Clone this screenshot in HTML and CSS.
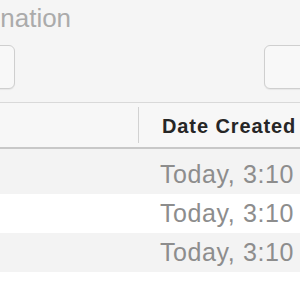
FILE: index.html
```html
<!DOCTYPE html>
<html lang="en">
<head>
  <meta charset="UTF-8">
  <title>Destination</title>
  <link rel="stylesheet" href="styles.css">
</head>
<body>
  <div class="window">
    <h1 class="title">Destination</h1>
    <div class="toolbar">
      <button class="btn btn-left"></button>
      <button class="btn btn-right"></button>
    </div>

    <div class="table">
      <div class="table-head">
        <div class="cell"></div>
        <span class="divider"></span>
        <div class="cell head-cell">Date Created</div>
      </div>
      <div class="row first">
        <div class="cell"></div>
        <div class="cell date">Today, 3:10 PM</div>
      </div>
      <div class="row">
        <div class="cell"></div>
        <div class="cell date">Today, 3:10 PM</div>
      </div>
      <div class="row">
        <div class="cell"></div>
        <div class="cell date">Today, 3:10 PM</div>
      </div>
      <div class="row">
        <div class="cell"></div>
        <div class="cell date"></div>
      </div>
    </div>
  </div>
</body>
</html>
```

FILE: styles.css
```css
html, body {
  margin: 0;
  height: 100%;
  overflow: hidden;
}

.window {
  background-color: #f5f5f5;
  height: 100%;
  overflow: hidden;
}

.title {
  margin: 0 0 0 -59px;
  font-family: "Liberation Sans", Arial, sans-serif;
  font-size: 26px;
  font-weight: normal;
  line-height: 36px;
  color: #ababab;
  white-space: nowrap;
}

.toolbar {
  display: flex;
  justify-content: space-between;
  margin-top: 9px;
  height: 44px;
}

.btn {
  width: 60px;
  height: 44px;
  border: 1px solid #cfcfcf;
  border-radius: 6px;
  background-color: #f8f8f8;
  box-shadow: 0 1px 1px rgba(0, 0, 0, 0.06);
}

.btn-left {
  margin-left: -45px;
}

.btn-right {
  margin-right: -24px;
}

.table {
  margin-top: 13px;
  font-family: "Liberation Sans", Arial, sans-serif;
  white-space: nowrap;
}

.table-head {
  display: grid;
  grid-template-columns: 138px 1px 1fr;
  height: 44px;
  border-top: 1px solid #d9d9d9;
  border-bottom: 2px solid #c8c8c8;
  background-color: #f7f7f7;
}

.divider {
  background-color: #d2d2d2;
  margin: 4px 0;
}

.head-cell {
  padding: 2px 0 0 23px;
  font-size: 20px;
  font-weight: bold;
  letter-spacing: 0.9px;
  line-height: 42px;
  color: #262626;
}

.row {
  display: grid;
  grid-template-columns: 139px 1fr;
  height: 39px;
  background-color: #fff;
}

.row:nth-child(even) {
  background-color: #f3f3f3;
}

.row.first {
  padding-top: 6px;
}

.date {
  padding-left: 21px;
  font-size: 25px;
  letter-spacing: 0.6px;
  line-height: 39px;
  color: #8d8d8d;
  overflow: hidden;
}
```
